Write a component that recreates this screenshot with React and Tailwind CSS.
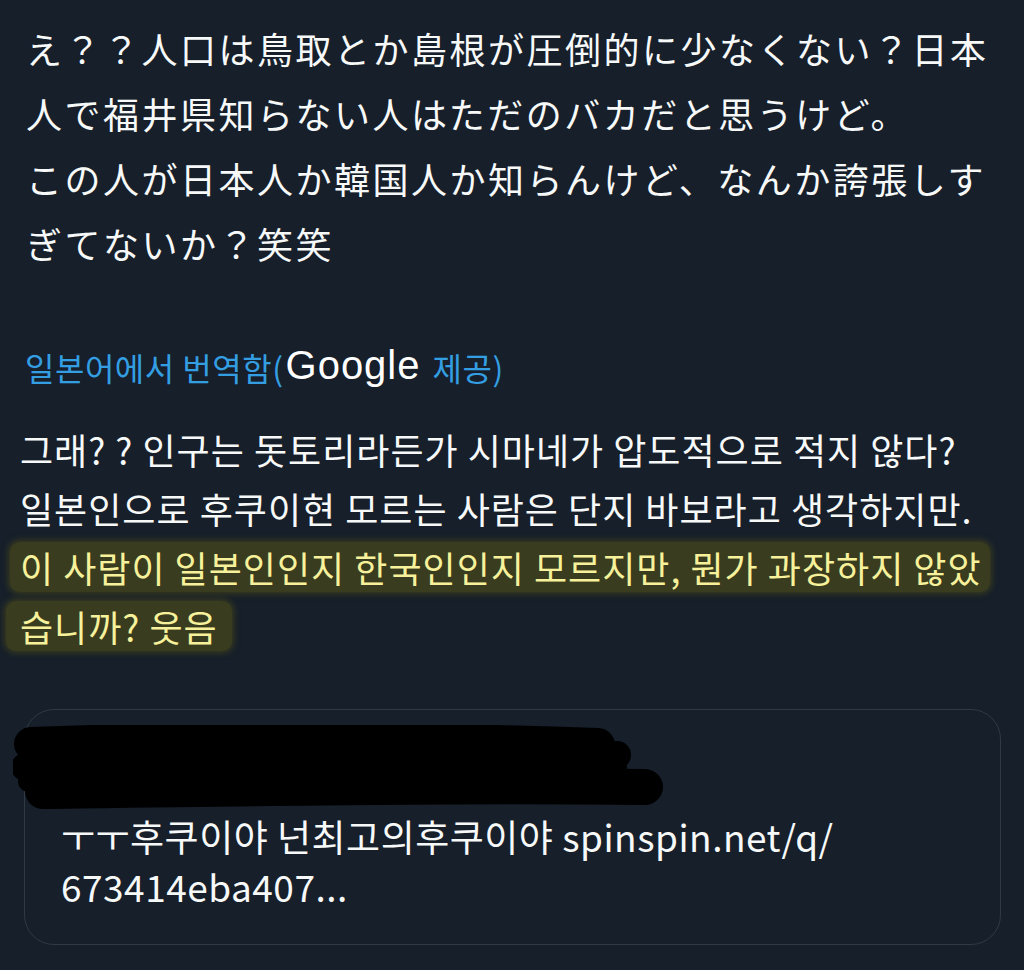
import React from 'react'

const jaLines = [
  'え？？人口は鳥取とか島根が圧倒的に少なくない？日本',
  '人で福井県知らない人はただのバカだと思うけど。',
  'この人が日本人か韓国人か知らんけど、なんか誇張しす',
  'ぎてないか？笑笑',
]

const koLines = [
  { text: '그래? ? 인구는 돗토리라든가 시마네가 압도적으로 적지 않다?' },
  { text: '일본인으로 후쿠이현 모르는 사람은 단지 바보라고 생각하지만.' },
  { text: '이 사람이 일본인인지 한국인인지 모르지만, 뭔가 과장하지 않았', mark: true },
  { text: '습니까? 웃음', mark: true, short: true },
]

// black marker scribble over the quoted account name
const Redaction = () => (
  <svg
    className="absolute -left-[48px] top-0"
    width="660"
    height="86"
    viewBox="0 0 660 86"
  >
    <g stroke="#000" strokeLinecap="round" fill="none">
      <path d="M18 19 C 200 12, 420 14, 585 20" strokeWidth="34" />
      <path d="M12 42 C 200 40, 420 40, 600 42" strokeWidth="28" />
      <path d="M30 66 C 250 63, 450 60, 632 62" strokeWidth="36" />
      <path d="M16 56 L 60 58" strokeWidth="22" />
    </g>
    <circle cx="604" cy="30" r="14" fill="#000" />
  </svg>
)

export default function App() {
  return (
    <div className="min-h-[970px] w-[1024px] bg-[#161f2a] text-[#f7f9f9] overflow-hidden">
      {/* original tweet */}
      <div className="pt-[16px] pl-[26px] font-['Noto_Sans_CJK_JP',sans-serif] text-[36px] leading-[65px] tracking-[2.5px] whitespace-nowrap">
        {jaLines.map((line) => (
          <div key={line}>{line}</div>
        ))}
      </div>

      {/* translation label */}
      <div className="mt-[71px] pl-[25px] flex items-center h-[40px] font-['Noto_Sans_CJK_KR',sans-serif] text-[32px] tracking-[0.5px] text-[#349ee2] whitespace-nowrap">
        <span>일본어에서 번역함(</span>
        <span className="font-['Liberation_Sans',sans-serif] font-medium text-[40px] tracking-[1px] text-white mx-[2px] -mt-[4px]">
          Google
        </span>
        <span className="ml-[10px]">제공)</span>
      </div>

      {/* translated text */}
      <div className="mt-[33px] pl-[20px] font-['Noto_Sans_CJK_KR',sans-serif] text-[36px] tracking-[1px] leading-[59px] whitespace-nowrap">
        {koLines.map((l) =>
          l.mark ? (
            <div key={l.text}>
              <span
                className={`inline-block leading-[50px] text-[#f6f19a] bg-[#393c1e] rounded-[10px] shadow-[0_0_6px_2px_#393c1e] ${
                  l.short ? '-ml-[14px] pl-[14px] pr-[14px]' : '-ml-[10px] pl-[10px] pr-[8px]'
                }`}
              >
                {l.text}
              </span>
            </div>
          ) : (
            <div key={l.text}>{l.text}</div>
          )
        )}
      </div>

      {/* quoted tweet card */}
      <div className="mt-[53px] ml-[24px] w-[977px] rounded-[30px] border border-[#2f3a45] pt-[15px] pb-[33px] px-[36px]">
        <div className="relative h-[86px]">
          <Redaction />
        </div>
        <div className="font-['Noto_Sans_CJK_KR',sans-serif] text-[37px] tracking-[0.5px] leading-[50px] whitespace-nowrap">
          <div>ㅜㅜ후쿠이야 넌최고의후쿠이야 spinspin.net/q/</div>
          <div>673414eba407...</div>
        </div>
      </div>
    </div>
  )
}
